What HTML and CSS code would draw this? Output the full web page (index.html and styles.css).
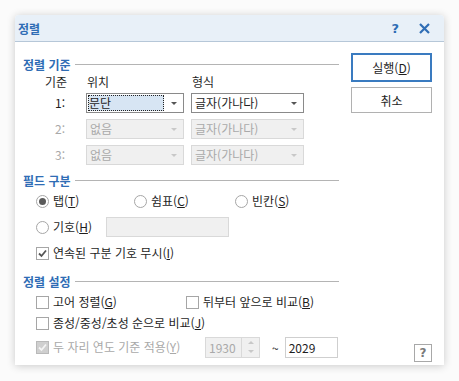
FILE: index.html
```html
<!DOCTYPE html>
<html lang="ko">
<head>
    <meta charset="UTF-8">
    <title>정렬</title>
    <link rel="stylesheet" href="styles.css">
</head>
<body>
    <div class="dialog">
        <div class="titlebar">
            <span class="title">정렬</span>
            <span class="tb-help">?</span>
            <svg class="tb-close" width="11" height="11" viewBox="0 0 11 11">
                <path d="M1 1L10 10M10 1L1 10" stroke="#2f6db5" stroke-width="2.2" fill="none"/>
            </svg>
        </div>

        <div class="dlg-body">
            <div class="main">
                <!-- 정렬 기준 -->
                <div class="section-head first"><span>정렬 기준</span><i></i></div>
                <div class="key-head">
                    <span class="kh-num">기준</span>
                    <span class="kh-pos">위치</span>
                    <span class="kh-type">형식</span>
                </div>
                <div class="key-grid">
                    <span class="key-num">1:</span>
                    <div class="select focus"><span class="sel-text">문단</span><b class="arrow"></b></div>
                    <div class="select"><span class="sel-text">글자(가나다)</span><b class="arrow"></b></div>

                    <span class="key-num off">2:</span>
                    <div class="select off"><span class="sel-text">없음</span><b class="arrow"></b></div>
                    <div class="select off"><span class="sel-text">글자(가나다)</span><b class="arrow"></b></div>

                    <span class="key-num off">3:</span>
                    <div class="select off"><span class="sel-text">없음</span><b class="arrow"></b></div>
                    <div class="select off"><span class="sel-text">글자(가나다)</span><b class="arrow"></b></div>
                </div>

                <!-- 필드 구분 -->
                <div class="section-head sep"><span>필드 구분</span><i></i></div>
                <div class="radio-row">
                    <label class="opt w98"><span class="radio on"></span>탭(<u>T</u>)</label>
                    <label class="opt w101"><span class="radio"></span>쉼표(<u>C</u>)</label>
                    <label class="opt"><span class="radio"></span>빈칸(<u>S</u>)</label>
                </div>
                <div class="opt-row gap6">
                    <label class="opt w70"><span class="radio"></span>기호(<u>H</u>)</label>
                    <div class="text-box off"></div>
                </div>
                <div class="opt-row gap6">
                    <label class="opt"><span class="check on">
                        <svg width="11" height="11" viewBox="0 0 11 11"><path d="M2 5.5L4.5 8L9 2.5" stroke="#555" stroke-width="1.8" fill="none"/></svg>
                    </span>연속된 구분 기호 무시(<u>I</u>)</label>
                </div>

                <!-- 정렬 설정 -->
                <div class="section-head set"><span>정렬 설정</span><i></i></div>
                <div class="opt-row gap3">
                    <label class="opt w150"><span class="check"></span>고어 정렬(<u>G</u>)</label>
                    <label class="opt"><span class="check"></span>뒤부터 앞으로 비교(<u>B</u>)</label>
                </div>
                <div class="opt-row gap1">
                    <label class="opt"><span class="check"></span>종성/중성/초성 순으로 비교(<u>J</u>)</label>
                </div>
                <div class="opt-row gap4">
                    <label class="opt w169 off"><span class="check on off">
                        <svg width="11" height="11" viewBox="0 0 11 11"><path d="M2 5.5L4.5 8L9 2.5" stroke="#f4f4f4" stroke-width="1.8" fill="none"/></svg>
                    </span>두 자리 연도 기준 적용(<u>Y</u>)</label>
                    <div class="spin off">
                        <span class="spin-val">1930</span>
                        <span class="spin-btns"><b class="up"></b><b class="down"></b></span>
                    </div>
                    <span class="tilde">~</span>
                    <div class="year-box">2029</div>
                </div>
            </div>

            <div class="side">
                <button class="btn default">실행(<u>D</u>)</button>
                <button class="btn">취소</button>
                <span class="help-btn">?</span>
            </div>
        </div>
    </div>
</body>
</html>
```

FILE: styles.css
```css
body {
    margin: 0;
    padding: 15px;
    background-color: #fbfbfb;
    font-family: "Noto Sans CJK KR", "Liberation Sans", sans-serif;
    font-size: 12px;
    color: #1e1e1e;
}

.dialog {
    width: 429px;
    height: 350px;
    background-color: #fff;
    border-radius: 4px 4px 0 0;
    box-shadow: 0 1px 8px rgba(0, 0, 0, 0.2);
    display: flex;
    flex-direction: column;
}

.titlebar {
    height: 26px;
    background-color: #e8f0f8;
    border-bottom: 1px solid #b6c7d8;
    border-radius: 4px 4px 0 0;
    display: flex;
    align-items: center;
    padding: 0 14px 0 3px;
    color: #2f6db5;
}

.title {
    font-weight: bold;
    font-size: 12px;
    flex: 1;
}

.tb-help {
    font-family: "DejaVu Sans", sans-serif;
    font-weight: bold;
    font-size: 13px;
    margin-right: 20px;
}

.dlg-body {
    flex: 1;
    display: flex;
    padding: 0 11px 0 8px;
}

.main {
    width: 316px;
}

.side {
    width: 81px;
    margin-left: 12px;
    padding: 11px 0 3px;
    display: flex;
    flex-direction: column;
    align-items: stretch;
}

.section-head {
    display: flex;
    align-items: center;
    height: 16px;
    color: #2f6db5;
    font-weight: bold;
}

.section-head i {
    flex: 1;
    height: 0;
    border-top: 1px solid #b4b4b4;
    margin-left: 4px;
    margin-top: 1px;
}

.section-head.first { margin-top: 14px; }
.section-head.sep { margin-top: 7px; }
.section-head.set { margin-top: 10px; }

.key-head {
    height: 19px;
    margin-top: 2px;
    line-height: 16px;
    display: grid;
    grid-template-columns: 63px 105px 113px;
}

.kh-num { padding-left: 22px; }
.kh-pos { padding-left: 1px; }
.kh-type { padding-left: 1px; }

.key-grid {
    display: grid;
    grid-template-columns: 56px 98px 113px;
    grid-auto-rows: 20px;
    column-gap: 7px;
    row-gap: 6px;
}

.key-num {
    padding-left: 32px;
    line-height: 20px;
}

.off,
.key-num.off {
    color: #a9a9a9;
}

.select {
    box-sizing: border-box;
    border: 1px solid #8a8a8a;
    background-color: #fff;
    display: flex;
    align-items: center;
}

.sel-text {
    flex: 1;
    padding-left: 3px;
    line-height: 16px;
}

.select.focus .sel-text {
    margin: 1px 0 1px 1px;
    padding-left: 1px;
    height: 16px;
    background-color: #d7e5f3;
    outline: 1px dotted #222;
    outline-offset: -1px;
}

.arrow {
    width: 0;
    height: 0;
    border-left: 3px solid transparent;
    border-right: 3px solid transparent;
    border-top: 3px solid #555;
    margin: 0 6px 0 7px;
}

.select.off {
    border-color: #d9d9d9;
    background-color: #f0f0f0;
}

.select.off .arrow {
    border-top-color: #c8c8c8;
}

.radio-row,
.opt-row {
    display: flex;
    align-items: center;
    height: 20px;
    padding-left: 13px;
}

.radio-row { margin-top: 3px; }
.gap6 { margin-top: 6px; }
.gap4 { margin-top: 4px; }
.gap3 { margin-top: 3px; }
.gap1 { margin-top: 1px; }

.opt {
    display: flex;
    align-items: center;
    line-height: 16px;
}

.w98 { width: 98px; }
.w101 { width: 101px; }
.w70 { width: 70px; }
.w150 { width: 150px; }
.w169 { width: 169px; }

.radio {
    box-sizing: border-box;
    width: 13px;
    height: 13px;
    border: 1px solid #a6a6a6;
    border-radius: 50%;
    margin-right: 4px;
    display: flex;
    align-items: center;
    justify-content: center;
}

.radio.on::after {
    content: "";
    width: 7px;
    height: 7px;
    border-radius: 50%;
    background-color: #5a5a5a;
}

.check {
    box-sizing: border-box;
    width: 13px;
    height: 13px;
    border: 1px solid #a6a6a6;
    margin-right: 4px;
    display: flex;
    align-items: center;
    justify-content: center;
}

.check.off {
    background-color: #cfcfcf;
    border-color: #b9b9b9;
}

.text-box {
    box-sizing: border-box;
    width: 123px;
    height: 20px;
    border: 1px solid #d9d9d9;
    background-color: #f0f0f0;
}

.spin {
    box-sizing: border-box;
    width: 55px;
    height: 21px;
    border: 1px solid #d9d9d9;
    background-color: #f0f0f0;
    display: flex;
}

.spin-val {
    flex: 1;
    padding-left: 3px;
    line-height: 19px;
}

.spin-btns {
    width: 17px;
    border-left: 1px solid #d9d9d9;
    display: flex;
    flex-direction: column;
    align-items: center;
    justify-content: space-around;
}

.spin-btns .up {
    border-left: 3px solid transparent;
    border-right: 3px solid transparent;
    border-bottom: 3px solid #c8c8c8;
}

.spin-btns .down {
    border-left: 3px solid transparent;
    border-right: 3px solid transparent;
    border-top: 3px solid #c8c8c8;
}

.tilde {
    margin: 0 6px 0 12px;
}

.year-box {
    box-sizing: border-box;
    width: 53px;
    height: 21px;
    border: 1px solid #cfcfcf;
    padding-left: 3px;
    line-height: 19px;
    background-color: #fff;
}

.btn {
    font-family: inherit;
    font-size: 12px;
    color: #1e1e1e;
    background-color: #fff;
    border: 1px solid #b1b1b1;
    height: 26px;
    padding: 0;
    cursor: pointer;
}

.btn.default {
    height: 29px;
    border: 2px solid #3a7bc0;
    margin-bottom: 5px;
}

.help-btn {
    margin-top: auto;
    align-self: flex-end;
    box-sizing: border-box;
    width: 18px;
    height: 18px;
    border: 1px solid #a8a8a8;
    text-align: center;
    line-height: 16px;
    font-family: "DejaVu Sans", sans-serif;
    font-weight: bold;
    font-size: 12px;
    color: #7a7a7a;
}
```
